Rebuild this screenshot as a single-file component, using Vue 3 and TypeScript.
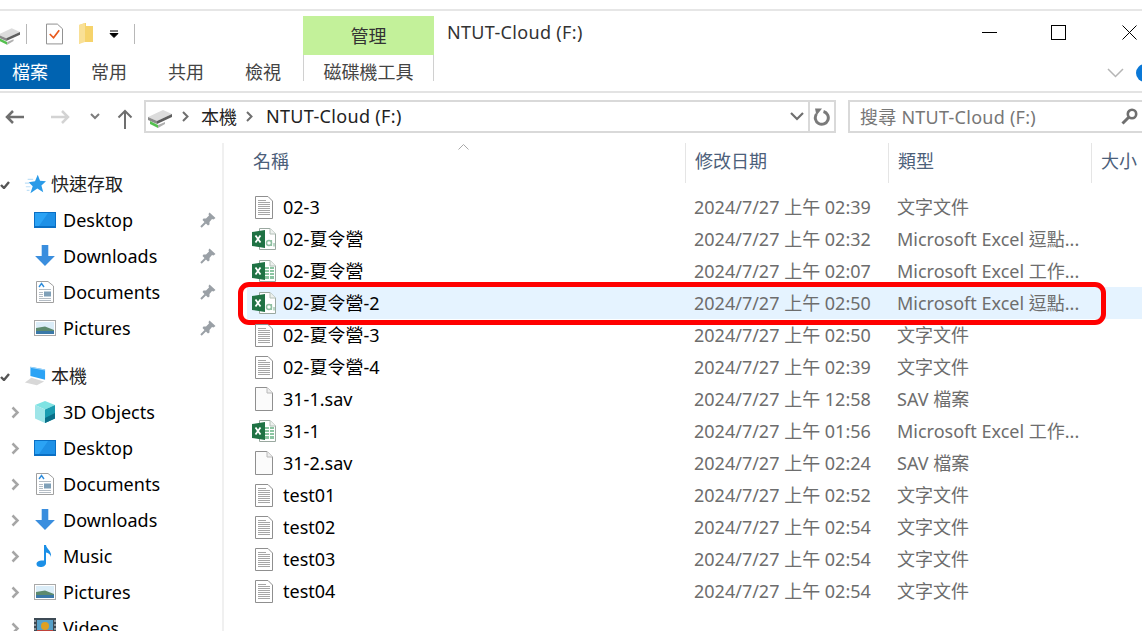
<script setup lang="ts">
type NavItem = { label: string; icon: string; pin?: boolean; caret?: string; head?: boolean; gap?: boolean };
type FileRow = { name: string; icon: string; date: string; type: string; active?: boolean };

const navItems: NavItem[] = [
  { label: '快速存取', icon: 'i-star', caret: 'open', head: true },
  { label: 'Desktop', icon: 'i-desktop', pin: true },
  { label: 'Downloads', icon: 'i-down', pin: true },
  { label: 'Documents', icon: 'i-docs', pin: true },
  { label: 'Pictures', icon: 'i-pics', pin: true },
  { label: '本機', icon: 'i-pc', caret: 'open', head: true, gap: true },
  { label: '3D Objects', icon: 'i-cube', caret: 'closed' },
  { label: 'Desktop', icon: 'i-desktop', caret: 'closed' },
  { label: 'Documents', icon: 'i-docs', caret: 'closed' },
  { label: 'Downloads', icon: 'i-down', caret: 'closed' },
  { label: 'Music', icon: 'i-music', caret: 'closed' },
  { label: 'Pictures', icon: 'i-pics', caret: 'closed' },
  { label: 'Videos', icon: 'i-video', caret: 'closed' },
];

const TXT = '文字文件';
const CSV = 'Microsoft Excel 逗點...';
const XLS = 'Microsoft Excel 工作...';
const SAV = 'SAV 檔案';

const files: FileRow[] = [
  { name: '02-3', icon: 'i-txt', date: '2024/7/27 上午 02:39', type: TXT },
  { name: '02-夏令營', icon: 'i-csv', date: '2024/7/27 上午 02:32', type: CSV },
  { name: '02-夏令營', icon: 'i-xls', date: '2024/7/27 上午 02:07', type: XLS },
  { name: '02-夏令營-2', icon: 'i-csv', date: '2024/7/27 上午 02:50', type: CSV, active: true },
  { name: '02-夏令營-3', icon: 'i-txt', date: '2024/7/27 上午 02:50', type: TXT },
  { name: '02-夏令營-4', icon: 'i-txt', date: '2024/7/27 上午 02:39', type: TXT },
  { name: '31-1.sav', icon: 'i-blank', date: '2024/7/27 上午 12:58', type: SAV },
  { name: '31-1', icon: 'i-xls', date: '2024/7/27 上午 01:56', type: XLS },
  { name: '31-2.sav', icon: 'i-blank', date: '2024/7/27 上午 02:24', type: SAV },
  { name: 'test01', icon: 'i-txt', date: '2024/7/27 上午 02:52', type: TXT },
  { name: 'test02', icon: 'i-txt', date: '2024/7/27 上午 02:54', type: TXT },
  { name: 'test03', icon: 'i-txt', date: '2024/7/27 上午 02:54', type: TXT },
  { name: 'test04', icon: 'i-txt', date: '2024/7/27 上午 02:54', type: TXT },
];

const columns = ['修改日期', '類型', '大小'];
</script>

<template>
  <div class="window">
    <!-- shared icons -->
    <svg class="defs" aria-hidden="true">
      <symbol id="i-drive" viewBox="0 0 24 18">
        <path d="M0 7 L15 0 L24 4 L9 11 Z" fill="#dcdcdc" />
        <path d="M0 7 L9 11 V14 L0 10 Z" fill="#8a8a8a" />
        <path d="M9 11 L24 4 V7 L9 14 Z" fill="#5f5f5f" />
        <path d="M2 11 L10 15 V18 L2 14 Z" fill="#54c04f" />
        <path d="M10 15 L17 12 V14 L10 18 Z" fill="#b0b0b0" />
      </symbol>
      <symbol id="i-star" viewBox="0 0 24 20">
        <path d="M15 0 L17.500 6.500 L24 7 L19 11.500 L21 19 L14.500 15 L7 20 L9.500 12.500 L5 8 L12 7 Z" fill="#2b9be8" />
        <path d="M4 5 H10 M1 9 H6 M2 13 H7 M3 17 H6" stroke="#bfe0f7" stroke-width="1.200" />
      </symbol>
      <symbol id="i-desktop" viewBox="0 0 22 16">
        <rect x="0" y="0" width="22" height="16" fill="#0a6fc4" />
        <path d="M1 1 H21 V14 H1 Z" fill="#2ba3f5" />
        <path d="M14 1 H21 V14 H5 Z" fill="#1e90e6" />
      </symbol>
      <symbol id="i-down" viewBox="0 0 20 20">
        <path d="M7 0 H13 V10 H19 L10 19 L1 10 H7 Z" fill="#3a8ede" />
      </symbol>
      <symbol id="i-docs" viewBox="0 0 18 22">
        <path d="M0.500 0.500 H12 L17.500 5 V21.500 H0.500 Z" fill="#fff" stroke="#a0a0a0" />
        <path d="M3 8.500 H15 M3 17.500 H15 M3 19.500 H15 M3 11.500 H7 M3 13.500 H7 M3 15.500 H7" stroke="#b4bcc4" />
        <path d="M3 6 L5.500 2.500 L8 6" fill="none" stroke="#2f8ddc" stroke-width="1.400" />
        <rect x="8" y="10.500" width="7" height="5" fill="#7fa0b8" />
      </symbol>
      <symbol id="i-pics" viewBox="0 0 22 16">
        <rect x="0.500" y="0.500" width="21" height="15" fill="#fff" stroke="#a9a9a9" />
        <rect x="2" y="2" width="18" height="12" fill="#dbedf8" />
        <path d="M2 8 L11 6.500 L20 10 V14 H2 Z" fill="#5d8a6e" />
        <path d="M2 11 L20 11 V14 H2 Z" fill="#3a78a8" />
      </symbol>
      <symbol id="i-pc" viewBox="0 0 24 22">
        <path d="M7 1 L23 4 V15 L7 11 Z" fill="#2ba3f5" />
        <path d="M7 1 L23 4 L23 5 L7 2 Z" fill="#a3d6f8" />
        <path d="M8 13 L22 17 L14 21 L1 18 Z" fill="#d8d8d8" />
      </symbol>
      <symbol id="i-cube" viewBox="0 0 22 22">
        <path d="M11 0 L21 4 L11 8.500 L1 4 Z" fill="#7fe3e3" />
        <path d="M1 4 L11 8.500 V22 L1 17.500 Z" fill="#9ee5e8" />
        <path d="M21 4 L11 8.500 V22 L21 17.500 Z" fill="#1b9cb0" />
        <path d="M21 12 L11 17 V22 L21 17.500 Z" fill="#0b6f88" />
      </symbol>
      <symbol id="i-music" viewBox="0 0 18 22">
        <path d="M8 0 H10 C10.500 4 16 6 15 12 C14.500 9.500 12.500 8 10 7.500 V18 C10 20.500 7.500 22 4.500 22 C2 22 0.500 21 0.500 19 C0.500 16.500 3.500 15 8 15.500 Z" fill="#1b8fe6" />
      </symbol>
      <symbol id="i-video" viewBox="0 0 22 20">
        <rect x="0" y="0" width="22" height="20" fill="#3d4a55" />
        <rect x="3" y="2" width="16" height="14" fill="#57a0c8" />
        <circle cx="11" cy="8" r="4" fill="#e0a020" />
        <path d="M3 12 H19 V16 H3 Z" fill="#c0423a" />
        <path d="M1 2 V18 M21 2 V18" stroke="#dfe5ea" stroke-dasharray="2 2" />
      </symbol>
      <symbol id="i-pin" viewBox="0 0 16 16">
        <path d="M9.500 0.500 L15.500 6 L13.500 7.500 L12 7 L9.500 10 L9.500 12.500 L8 13.500 L2.500 8 L3.500 6.500 L6 6.500 L9 3.500 L8.500 2 Z" fill="#9aa0a6" />
        <path d="M5.500 10.500 L1 15" stroke="#9aa0a6" stroke-width="2" />
      </symbol>
      <symbol id="i-txt" viewBox="0 0 24 24">
        <path d="M3.500 1.500 H16 L20.500 6 V23.500 H3.500 Z" fill="#fff" stroke="#8f8f8f" />
        <path d="M6 5.500 H14 M6 7.500 H18 M6 9.500 H18 M6 11.500 H18 M6 13.500 H18 M6 15.500 H18 M6 17.500 H18 M6 19.500 H18" stroke="#a6a6a6" />
      </symbol>
      <symbol id="i-blank" viewBox="0 0 24 24">
        <path d="M3.500 0.500 H15 L20.500 6 V23.500 H3.500 Z" fill="#fbfbfb" stroke="#8f8f8f" />
        <path d="M15 0.500 V6 H20.500" fill="#eee" stroke="#b8b8b8" />
      </symbol>
      <symbol id="i-csv" viewBox="0 0 24 24">
        <path d="M7.500 1.500 H18 L23.500 7 V22.500 H7.500 Z" fill="#fff" stroke="#9aa8a0" />
        <path d="M18 1.500 V7 H23.500" fill="#eef2ef" stroke="#b4c0b8" />
        <path d="M0 5 L13 3 V21 L0 19 Z" fill="#1f7244" />
        <path d="M3.500 8.500 L8.500 15.500 M8.500 8.500 L3.500 15.500" stroke="#fff" stroke-width="1.800" />
        <circle cx="17" cy="16" r="2.500" fill="none" stroke="#8dbfa0" stroke-width="1.400" />
        <path d="M19.500 13 V19 M22 16 V19.500" stroke="#8dbfa0" stroke-width="1.200" />
      </symbol>
      <symbol id="i-xls" viewBox="0 0 24 24">
        <path d="M7.500 1.500 H18 L23.500 7 V22.500 H7.500 Z" fill="#fff" stroke="#9aa8a0" />
        <path d="M18 1.500 V7 H23.500" fill="#eef2ef" stroke="#b4c0b8" />
        <path d="M13 8 H22 V20 H13 Z" fill="#8cc5a2" />
        <path d="M13 10.500 H22 M13 13.500 H22 M13 16.500 H22 M17.500 8 V20" stroke="#fff" />
        <path d="M0 5 L13 3 V21 L0 19 Z" fill="#1f7244" />
        <path d="M3.500 8.500 L8.500 15.500 M8.500 8.500 L3.500 15.500" stroke="#fff" stroke-width="1.800" />
      </symbol>
    </svg>

    <div class="top-edge"></div>

    <header class="titlebar">
      <div class="qat">
        <svg class="drive-qat"><use href="#i-drive" /></svg>
        <span class="qat-sep"></span>
        <svg class="qat-check" viewBox="0 0 18 22">
          <path d="M0.500 0.500 H12 L17.500 5.500 V21.500 H0.500 Z" fill="#fff" stroke="#8a8a8a" />
          <path d="M4 11 L8 15 L14 7" fill="none" stroke="#e8591c" stroke-width="1.800" />
        </svg>
        <svg class="qat-folder" viewBox="0 0 14 22">
          <path d="M0 2 L6 0 H7 V3 H14 V19 H3 L0 21 Z" fill="#f6d36b" />
          <path d="M0 2 L6 0 V19 L0 21 Z" fill="#f9e096" />
        </svg>
        <svg class="qat-drop" viewBox="0 0 10 8">
          <path d="M1 1 H9 M1 3.500 H9 L5 7.500 Z" fill="#000" stroke="#000" stroke-width="1" />
        </svg>
        <span class="qat-sep qat-sep-end"></span>
      </div>
      <div class="ctx-head">管理</div>
      <div class="win-title">NTUT-Cloud (F:)</div>
      <div class="win-controls">
        <span class="wc-min"></span>
        <span class="wc-max"></span>
        <svg class="wc-close" viewBox="0 0 15 15"><path d="M0.500 0.500 L14.500 14.500 M14.500 0.500 L0.500 14.500" stroke="#000" /></svg>
      </div>
    </header>

    <nav class="tabs">
      <div class="tab tab-file">檔案</div>
      <div class="tab">常用</div>
      <div class="tab">共用</div>
      <div class="tab tab-view">檢視</div>
      <div class="tab-ctx">磁碟機工具</div>
      <div class="tabs-right">
        <svg class="ribbon-chev" viewBox="0 0 17 10"><path d="M1 1 L8.500 8.500 L16 1" fill="none" stroke="#b5b5b5" stroke-width="1.500" /></svg>
        <span class="help"></span>
      </div>
    </nav>

    <div class="addr-row">
      <div class="addr-nav">
        <svg class="nav-arrow" viewBox="0 0 20 16"><path d="M19 8 H2 M8 2 L2 8 L8 14" fill="none" stroke="#6f6f6f" stroke-width="2.500" /></svg>
        <svg class="nav-arrow nav-fwd" viewBox="0 0 20 16"><path d="M1 8 H18 M12 2 L18 8 L12 14" fill="none" stroke="#d3d3d3" stroke-width="2.500" /></svg>
        <svg class="nav-drop" viewBox="0 0 10 7"><path d="M1 1 L5 5 L9 1" fill="none" stroke="#7c7c7c" stroke-width="2" /></svg>
        <svg class="nav-up" viewBox="0 0 16 20"><path d="M8 20 V2 M1.500 8.500 L8 2 L14.500 8.500" fill="none" stroke="#6f6f6f" stroke-width="2" /></svg>
      </div>
      <div class="addr-box">
        <svg class="drive-addr"><use href="#i-drive" /></svg>
        <svg class="crumb-sep" viewBox="0 0 7 11"><path d="M1 1 L5.500 5.500 L1 10" fill="none" stroke="#6f6f6f" stroke-width="2" /></svg>
        <span class="crumb">本機</span>
        <svg class="crumb-sep" viewBox="0 0 7 11"><path d="M1 1 L5.500 5.500 L1 10" fill="none" stroke="#6f6f6f" stroke-width="2" /></svg>
        <span class="crumb crumb-drive">NTUT-Cloud (F:)</span>
        <svg class="addr-drop" viewBox="0 0 14 9"><path d="M1 1 L7 7 L13 1" fill="none" stroke="#6f6f6f" stroke-width="2.200" /></svg>
        <div class="addr-refresh">
          <svg viewBox="0 0 18 18"><path d="M10.500 3.500 A6.500 6.500 0 1 1 3.500 6" fill="none" stroke="#7a7a7a" stroke-width="3" /><path d="M2 0.500 L9 0.500 L3.500 7.500 Z" fill="#7a7a7a" /></svg>
        </div>
      </div>
      <div class="search-box">
        <span class="search-text">搜尋 NTUT-Cloud (F:)</span>
        <svg class="search-icon" viewBox="0 0 17 17"><circle cx="11" cy="6" r="4.200" fill="none" stroke="#6f6f6f" stroke-width="2.600" /><path d="M7.500 9.500 L1.500 15.500" stroke="#6f6f6f" stroke-width="3" /></svg>
      </div>
    </div>

    <main class="body">
      <aside class="sidebar">
        <div v-for="(item, i) in navItems" :key="i" class="nav-row" :class="{ 'nav-gap': item.gap, 'nav-head': item.head }">
          <svg v-if="item.caret === 'open'" class="caret-open" viewBox="0 0 10 8"><path d="M1 4 L4 7 L9 1" fill="none" stroke="#555" stroke-width="2.400" /></svg>
          <svg v-else-if="item.caret === 'closed'" class="caret-closed" viewBox="0 0 9 13"><path d="M1.500 1.500 L6.500 6.500 L1.500 11.500" fill="none" stroke="#a6a6a6" stroke-width="2.500" /></svg>
          <svg class="nav-icon"><use :href="'#' + item.icon" /></svg>
          <span class="nav-label">{{ item.label }}</span>
          <svg v-if="item.pin" class="nav-pin"><use href="#i-pin" /></svg>
        </div>
      </aside>

      <section class="list">
        <div class="list-head">
          <svg class="sort-up" viewBox="0 0 11 6"><path d="M0.500 5.500 L5.500 0.500 L10.500 5.500" fill="none" stroke="#a8a8a8" /></svg>
          <div class="col-name">名稱</div>
          <div v-for="c in columns" :key="c" class="col-h">{{ c }}</div>
        </div>
        <div class="rows">
          <div v-for="(f, i) in files" :key="i" class="row" :class="{ active: f.active }">
            <svg class="file-icon"><use :href="'#' + f.icon" /></svg>
            <span class="file-name">{{ f.name }}</span>
            <span class="file-date">{{ f.date }}</span>
            <span class="file-type">{{ f.type }}</span>
            <div v-if="f.active" class="red-mark"></div>
          </div>
        </div>
      </section>
    </main>
  </div>
</template>

<style scoped>
.window {
  position: relative;
  width: 1142px;
  height: 631px;
  overflow: hidden;
  background: #fff;
  display: flex;
  flex-direction: column;
  font-family: "Noto Sans", "Noto Sans CJK TC", sans-serif;
  font-size: 18px;
  color: #000;
}
.defs { position: absolute; width: 0; height: 0; }
.top-edge { height: 9px; border-bottom: 2px solid #e6e6e6; flex: none; }

.titlebar { height: 44px; flex: none; display: flex; }
.qat { width: 303px; flex: none; display: flex; align-items: center; padding-top: 2px; box-sizing: border-box; }
.drive-qat { width: 22px; height: 17px; margin-left: -2px; margin-top: 4px; flex: none; }
.qat-sep { width: 1px; height: 20px; background: #b8b8b8; margin-left: 6px; }
.qat-check { width: 17px; height: 22px; margin-left: 19px; }
.qat-folder { width: 14px; height: 22px; margin-left: 16px; }
.qat-drop { width: 10px; height: 8px; margin-left: 16px; }
.qat-sep-end { margin-left: 15px; }
.ctx-head { width: 131px; margin-top: 5px; padding-bottom: 2px; box-sizing: border-box; background: #c3f19a; color: #333; display: flex; align-items: center; justify-content: center; }
.win-title { margin-left: 13px; padding-top: 8px; color: #333; line-height: 26px; letter-spacing: 0.33px; }
.win-controls { margin-left: auto; display: flex; align-items: center; padding-bottom: 1px; box-sizing: border-box; }
.wc-min { width: 15px; height: 1px; background: #000; margin-right: 54px; }
.wc-max { width: 13px; height: 13px; border: 1px solid #000; margin-right: 56px; }
.wc-close { width: 15px; height: 15px; margin-right: 5px; }

.tabs { height: 36px; flex: none; display: flex; align-items: flex-start; border-bottom: 2px solid #e3e3e3; }
.tab { width: 77px; height: 34px; padding-left: 21px; box-sizing: border-box; line-height: 34px; color: #444; }
.tab-view { width: 79px; }
.tab-file { width: 70px; padding-left: 12px; background: #0063b1; color: #fff; }
.tab-ctx { width: 131px; height: 26px; box-sizing: border-box; border-left: 1px solid #d0d0d0; border-right: 1px solid #d0d0d0; text-align: center; line-height: 34px; color: #444; white-space: nowrap; }
.tabs-right { margin-left: auto; display: flex; align-items: center; height: 36px; }
.ribbon-chev { width: 17px; height: 10px; flex: none; }
.help { width: 18px; height: 18px; flex: none; border-radius: 50%; background: #0a78d7; margin-left: 12px; margin-right: -12px; }

.addr-row { height: 50px; flex: none; display: flex; align-items: flex-start; padding-top: 7px; box-sizing: border-box; }
.addr-nav { width: 144px; height: 33px; flex: none; display: flex; align-items: center; }
.nav-arrow { width: 20px; height: 16px; margin-left: 5px; }
.nav-fwd { margin-left: 25px; }
.nav-drop { width: 10px; height: 7px; margin-left: 20px; }
.nav-up { width: 16px; height: 20px; margin-left: 17px; margin-top: 4px; }
.addr-box { width: 692px; height: 33px; flex: none; box-sizing: border-box; border: 2px solid #d9d9d9; display: flex; align-items: center; padding-left: 2px; }
.drive-addr { width: 24px; height: 18px; margin-top: 4px; flex: none; }
.crumb-sep { width: 7px; height: 11px; flex: none; margin: 0 12px 0 10px; }
.crumb { color: #222; margin-bottom: 2px; }
.crumb:first-of-type { margin-right: -1px; }
.crumb-drive { letter-spacing: 0.33px; margin-left: 1px; }
.addr-drop { width: 14px; height: 9px; margin-left: auto; margin-right: 4px; }
.addr-refresh { width: 26px; height: 29px; border-left: 2px solid #d9d9d9; display: flex; align-items: center; justify-content: center; box-sizing: border-box; }
.addr-refresh svg { width: 18px; height: 18px; }
.search-box { flex: none; width: 300px; height: 33px; margin-left: 12px; box-sizing: border-box; border: 2px solid #d9d9d9; display: flex; align-items: center; padding-left: 10px; color: #777; }
.search-text { letter-spacing: 0.25px; margin-bottom: 2px; }
.search-icon { width: 17px; height: 17px; margin-left: auto; margin-right: 8px; }

.body { flex: 1; display: flex; min-height: 0; }
.sidebar { width: 224px; flex: none; box-sizing: border-box; border-right: 2px solid #f0f0f0; padding-top: 23px; }
.nav-row { height: 36px; position: relative; display: flex; align-items: center; padding-left: 34px; }
.nav-gap { margin-top: 12px; }
.nav-head { padding-left: 24px; }
.nav-icon { width: 22px; height: 22px; flex: none; }
.nav-label { margin-left: 7px; white-space: nowrap; }
.nav-head .nav-label { margin-left: 5px; margin-bottom: 2px; color: #222; }
.caret-open { position: absolute; left: 0; top: 15px; width: 10px; height: 8px; }
.caret-closed { position: absolute; left: 11px; top: 12px; width: 9px; height: 13px; }
.nav-pin { width: 16px; height: 16px; margin-left: auto; margin-right: 6px; flex: none; }

.list { flex: 1; min-width: 0; }
.list-head { position: relative; height: 40px; display: flex; color: #4c607a; }
.sort-up { position: absolute; left: 234px; top: 1px; width: 11px; height: 6px; }
.col-name { width: 461px; flex: none; padding-left: 29px; box-sizing: border-box; line-height: 36px; }
.col-h { height: 40px; line-height: 36px; border-left: 1px solid #e5e5e5; padding-left: 9px; box-sizing: border-box; flex: none; width: 203px; white-space: nowrap; }
.col-h:last-child { width: 60px; }
.rows { padding-top: 8px; }
.row { height: 32px; position: relative; display: flex; align-items: center; margin-left: 23px; padding-left: 5px; white-space: nowrap; line-height: 24px; }
.row.active { background: #e5f3ff; }
.file-icon { width: 24px; height: 24px; flex: none; }
.file-name { width: 418px; flex: none; padding-left: 7px; box-sizing: border-box; }
.file-date { width: 203px; flex: none; color: #6d6d6d; }
.file-type { color: #6d6d6d; }
.red-mark { position: absolute; left: -9px; right: 36px; top: -5px; bottom: -6px; border: 5px solid #f00; border-radius: 11px; pointer-events: none; }
</style>

<style>
html, body { margin: 0; overflow: hidden; background: #fff; }
</style>
